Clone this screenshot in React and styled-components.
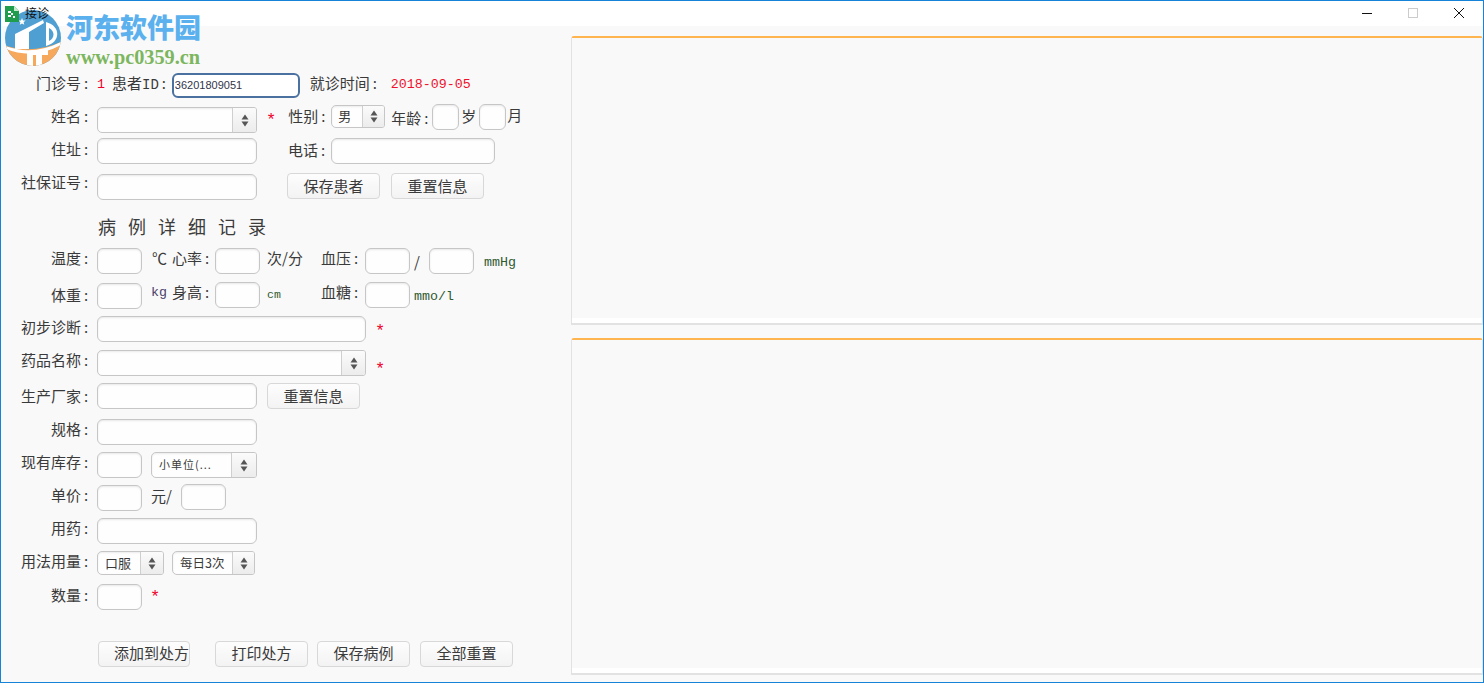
import React from "react";
import styled, { createGlobalStyle } from "styled-components";

const Global = createGlobalStyle`
  html, body { margin: 0; padding: 0; background: #fff; }
  #root { width: 1484px; height: 683px; overflow: hidden; }
  * { box-sizing: border-box; }
`;

const cjk = `"Noto Sans CJK SC", "Liberation Sans", sans-serif`;
const mono = `"Liberation Mono", "Noto Sans CJK SC", monospace`;

const Window = styled.div`
  position: relative;
  width: 1484px;
  height: 683px;
  border: 1px solid #1683d8;
  display: flex;
  flex-direction: column;
  background: #f9f9f9;
  font-family: ${cjk};
  color: #3a3a3a;
  overflow: hidden;
`;
const TitleBar = styled.div`
  height: 25px;
  flex: none;
  background: #fff;
  display: flex;
  align-items: center;
  padding-left: 4px;
`;
const TitleIcon = styled.div`
  display: flex;
  position: relative;
  z-index: 4;
`;
const TitleText = styled.span`
  margin-left: 6px;
  font-size: 12px;
  color: #111;
  position: relative;
  top: -1px;
  z-index: 4;
`;
const WinControls = styled.div`
  margin-left: auto;
  display: flex;
  margin-right: 1px;
`;
const WinBtn = styled.div`
  width: 46px;
  height: 25px;
  display: flex;
  align-items: flex-start;
  justify-content: center;
  padding-top: 7px;
`;
const Watermark = styled.div`
  position: absolute;
  left: 2px;
  top: 7px;
  display: flex;
  z-index: 3;
  pointer-events: none;
`;
const BrandText = styled.div`
  display: flex;
  flex-direction: column;
  margin-left: 3px;
  padding-top: 2px;
`;
const BrandName = styled.div`
  font-family: ${cjk};
  font-weight: 900;
  font-size: 27px;
  line-height: 34px;
  color: #5bb0ee;
`;
const BrandUrl = styled.div`
  font-family: "Liberation Serif", serif;
  font-weight: 700;
  font-size: 20.3px;
  line-height: 18px;
  margin-top: 4px;
  color: #7cb65e;
`;
const Body = styled.div`
  flex: 1;
  display: flex;
  min-height: 0;
`;
const Form = styled.div`
  width: 570px;
  flex: none;
  display: flex;
  flex-direction: column;
`;
const Row = styled.div`
  display: flex;
  align-items: center;
  height: ${p => p.$h || 26}px;
  margin-top: ${p => p.$top}px;
`;
const LabelBox = styled.div`
  width: 96px;
  flex: none;
  text-align: right;
  padding-right: 3px;
  font-size: 15px;
  white-space: nowrap;
  margin-bottom: ${p => (p.$up || 0) * 2}px;
`;
const Colon = styled.span`
  display: inline-block;
  width: 13px;
  padding-left: 3px;
  text-align: left;
`;
const Text = styled.div`
  flex: none;
  font-size: ${p => p.$size || 15}px;
  white-space: nowrap;
  width: ${p => (p.$w ? `${p.$w}px` : "auto")};
  margin-left: ${p => p.$ml || 0}px;
  margin-bottom: ${p => (p.$up || 0) * 2}px;
  margin-top: ${p => (p.$down || 0) * 2}px;
  color: ${p => p.$color || "inherit"};
`;
const Mono = styled(Text)`
  font-family: ${mono};
  font-size: ${p => p.$size || 13.3}px;
`;
const Star = styled.div`
  flex: none;
  font-family: ${mono};
  color: #f0002a;
  font-size: 17px;
  line-height: 17px;
  margin-left: ${p => p.$ml || 9}px;
  margin-top: ${p => p.$down ?? 4}px;
`;
const Input = styled.input`
  flex: none;
  width: ${p => p.$w}px;
  height: 26px;
  margin: 0 0 ${p => (p.$up || 0) * 2}px ${p => p.$ml || 0}px;
  padding: 0 3px;
  background: #fefefe;
  border: 1px solid #c6c6c6;
  border-radius: 6px;
  box-shadow: inset 0 1px 2px rgba(0, 0, 0, 0.09);
  outline: none;
  font-family: "Liberation Sans", sans-serif;
  font-size: 11px;
  color: #33334a;
`;
const FocusInput = styled(Input)`
  border: 2px solid #4a71a0;
  padding: 0 1px;
  height: 25px;
  box-shadow: none;
  background: #fff;
`;
const Select = styled.div`
  flex: none;
  display: flex;
  width: ${p => p.$w}px;
  height: ${p => p.$h || 26}px;
  margin-left: ${p => p.$ml || 0}px;
  margin-bottom: ${p => (p.$up || 0) * 2}px;
  background: #fefefe;
  border: 1px solid #c6c6c6;
  border-radius: 5px 3px 3px 5px;
  box-shadow: inset 0 1px 2px rgba(0, 0, 0, 0.08);
  overflow: hidden;
`;
const SelectValue = styled.div`
  flex: 1;
  padding-left: ${p => p.$pad || 7}px;
  font-size: ${p => p.$size || 13}px;
  letter-spacing: ${p => p.$track || 0}px;
  line-height: ${p => (p.$h || 26) - 3}px;
  white-space: nowrap;
  overflow: hidden;
`;
const SelectArrow = styled.div`
  flex: none;
  width: ${p => p.$w || 24}px;
  border-left: 1px solid #cfcfcf;
  background: linear-gradient(#fbfbfb, #ececec);
  display: flex;
  align-items: center;
  justify-content: center;
`;
const Button = styled.button`
  flex: none;
  width: ${p => p.$w}px;
  height: 26px;
  margin: 0 0 ${p => (p.$up || 0) * 2}px ${p => p.$ml || 0}px;
  padding: 0 0 ${p => p.$lift || 2}px ${p => p.$indent || 0}px;
  border: 1px solid #d8d8d8;
  border-radius: 4px;
  background: linear-gradient(#fdfdfd, #f3f3f3);
  font-family: ${cjk};
  font-size: 15px;
  color: #3a3a3a;
  white-space: nowrap;
  text-align: ${p => (p.$indent ? "left" : "center")};
`;
const Heading = styled.div`
  margin-left: 97px;
  font-size: 18px;
  line-height: 24px;
  height: 24px;
  letter-spacing: 12px;
  margin-top: 14px;
  color: #3c3c3c;
  white-space: nowrap;
`;
const Panels = styled.div`
  flex: 1;
  min-width: 0;
  display: flex;
  flex-direction: column;
  gap: 13px;
  padding: 10px 0 7px 0;
`;
const Panel = styled.div`
  height: ${p => p.$h}px;
  flex: none;
  border: 1px solid #e2e2e2;
  border-top: 2px solid #ffb54f;
  border-bottom: 2px solid #e2e2e2;
  border-radius: 3px 3px 0 0;
  display: flex;
  flex-direction: column;
`;
const PanelInner = styled.div`
  flex: 1;
  background: #f9f9f9;
`;
const PanelFoot = styled.div`
  height: 5px;
  background: #fff;
`;

const UpDown = () => (
  <svg width="8" height="13" viewBox="0 0 8 13">
    <path d="M4 0.5 L7.5 5.5 H0.5 Z" fill="#555" />
    <path d="M0.5 7.5 H7.5 L4 12.5 Z" fill="#555" />
  </svg>
);

const Sel = ({ w, h, ml, up, arrow, size, pad, track, children }) => (
  <Select $w={w} $h={h} $ml={ml} $up={up}>
    <SelectValue $size={size} $pad={pad} $h={h} $track={track}>{children}</SelectValue>
    <SelectArrow $w={arrow}><UpDown /></SelectArrow>
  </Select>
);

const Label = ({ up, children }) => (
  <LabelBox $up={up}>{children}<Colon>:</Colon></LabelBox>
);

const Field = ({ up, w, ml, children }) => (
  <Text $up={up} $w={w} $ml={ml}>{children}<Colon>:</Colon></Text>
);

const AppIcon = () => (
  <svg width="14" height="16" viewBox="0 0 14 16">
    <path d="M0 0 H9 L14 5 V16 H0 Z" fill="#1f9d4d" />
    <path d="M9 0 L14 5 H9 Z" fill="#c8ecd0" />
    <path d="M3 5 h3 v2 h-3z M6 7 h2 v2 h-2z M3 9 h3 v2 h-3z M8 10 h2 v2 h-2z" fill="#fff" />
  </svg>
);

const Logo = () => (
  <svg width="60" height="60" viewBox="0 0 60 60">
    <defs>
      <clipPath id="disc"><circle cx="30" cy="30" r="28" /></clipPath>
    </defs>
    <g clipPath="url(#disc)">
      <rect width="60" height="60" fill="#4f9fd2" />
      <path d="M0 37 Q30 47 60 33 V60 H0 Z" fill="#f6a85c" />
      <path d="M2 38 Q30 48 58 34 L58 37 Q30 52 3 41 Z" fill="#fff" />
      <path d="M12 26 L40 12 L41 15 L26 24 V41 H12 Z" fill="#fff" />
      <path d="M43 14 C58 18 58 34 43 38 Z" fill="#fff" />
      <path d="M46 20 C52 23 52 30 46 33 Z" fill="#4f9fd2" />
      <path d="M24 44 L45 41 V47 H39 V60 H33 V47 H30 V60 H24 Z" fill="#fff" />
    </g>
    <path d="M19 10 l1 2.4 2.6 .2 -2 1.7 .7 2.5 -2.3 -1.4 -2.3 1.4 .7 -2.5 -2 -1.7 2.6 -.2z" fill="#fff" />
  </svg>
);

export default function App() {
  return (
    <>
      <Global />
      <Window>
        <TitleBar>
          <TitleIcon><AppIcon /></TitleIcon>
          <TitleText>接诊</TitleText>
          <WinControls>
            <WinBtn>
              <svg width="10" height="12" viewBox="0 0 10 12"><path d="M0 5.5 H10" stroke="#111" strokeWidth="1" /></svg>
            </WinBtn>
            <WinBtn>
              <svg width="10" height="10" viewBox="0 0 10 10"><rect x="0.5" y="0.5" width="9" height="9" fill="none" stroke="#ccc" /></svg>
            </WinBtn>
            <WinBtn>
              <svg width="10" height="10" viewBox="0 0 10 10"><path d="M0 0 L10 10 M10 0 L0 10" stroke="#111" strokeWidth="1" /></svg>
            </WinBtn>
          </WinControls>
        </TitleBar>
        <Watermark>
          <Logo />
          <BrandText>
            <BrandName>河东软件园</BrandName>
            <BrandUrl>www.pc0359.cn</BrandUrl>
          </BrandText>
        </Watermark>
        <Body>
          <Form>
            <Row $top={46}>
              <Label up={3}>门诊号</Label>
              <Mono $w={15} $color="#f0002a" $up={1}>1</Mono>
              <Text $up={3}>患者<Mono as="span" $size={14}>ID</Mono><Colon>:</Colon></Text>
              <FocusInput $w={128} readOnly value="36201809051" />
              <Field up={3} ml={10}>就诊时间</Field>
              <Mono $ml={8} $color="#f0102a" $up={1}>2018-09-05</Mono>
            </Row>
            <Row $top={9}>
              <Label up={5}>姓名</Label>
              <Sel w={160} />
              <Star $down={0}>*</Star>
              <Field ml={12} w={43} up={5}>性别</Field>
              <Sel w={54} h={23} up={4} arrow={22} size={13} pad={6}>男</Sel>
              <Field ml={6} w={41} up={3}>年龄</Field>
              <Input $w={27} $up={3} />
              <Text $ml={2} $w={18} $up={5}>岁</Text>
              <Input $w={27} $up={3} />
              <Text $ml={1} $up={6}>月</Text>
            </Row>
            <Row $top={5}>
              <Label up={3}>住址</Label>
              <Input $w={160} />
              <Field ml={31} w={43} up={2}>电话</Field>
              <Input $w={164} />
            </Row>
            <Row $top={10}>
              <Label up={6}>社保证号</Label>
              <Input $w={160} />
              <Button $w={93} $ml={30} $up={1}>保存患者</Button>
              <Button $w={93} $ml={11} $up={1}>重置信息</Button>
            </Row>
            <Heading>病例详细记录</Heading>
            <Row $top={10}>
              <Label up={4}>温度</Label>
              <Input $w={45} />
              <Text $ml={10} $w={20} $up={4}>℃</Text>
              <Field w={43} up={4}>心率</Field>
              <Input $w={45} />
              <Text $ml={7} $w={54} $up={4}>次/分</Text>
              <Field w={44} up={4}>血压</Field>
              <Input $w={45} />
              <Text $ml={4} $w={15} $up={0}>/</Text>
              <Input $w={45} />
              <Mono $ml={10} $color="#2f5a2f" $down={1}>mmHg</Mono>
            </Row>
            <Row $top={9}>
              <Label up={2}>体重</Label>
              <Input $w={45} />
              <Mono $ml={9} $w={21} $color="#4a3f6a" $up={4}>kg</Mono>
              <Field w={43} up={5}>身高</Field>
              <Input $w={45} $up={1} />
              <Mono $ml={7} $w={54} $size={11.5} $color="#2f5a2f" $up={2}>cm</Mono>
              <Field w={44} up={5}>血糖</Field>
              <Input $w={45} $up={1} />
              <Mono $ml={4} $color="#2f5a2f">mmo/l</Mono>
            </Row>
            <Row $top={7}>
              <Label up={3}>初步诊断</Label>
              <Input $w={269} />
              <Star>*</Star>
            </Row>
            <Row $top={8}>
              <Label up={4}>药品名称</Label>
              <Sel w={269} />
              <Star $down={12}>*</Star>
            </Row>
            <Row $top={7}>
              <Label up={1}>生产厂家</Label>
              <Input $w={160} />
              <Button $w={93} $ml={10}>重置信息</Button>
            </Row>
            <Row $top={10}>
              <Label up={4}>规格</Label>
              <Input $w={160} />
            </Row>
            <Row $top={7}>
              <Label up={4}>现有库存</Label>
              <Input $w={45} />
              <Sel w={106} ml={9} size={11} arrow={25} track={1}>小单位(...</Sel>
            </Row>
            <Row $top={7}>
              <Label up={4}>单价</Label>
              <Input $w={45} />
              <Text $ml={9} $w={30} $up={3}>元/</Text>
              <Input $w={45} $up={1} />
            </Row>
            <Row $top={7}>
              <Label up={4}>用药</Label>
              <Input $w={160} />
            </Row>
            <Row $top={7} $h={24}>
              <Label up={3}>用法用量</Label>
              <Sel w={67} h={24} arrow={23} size={13}>口服</Sel>
              <Sel w={83} h={24} ml={8} arrow={22} size={12.5}>每日3次</Sel>
            </Row>
            <Row $top={9}>
              <Label up={3}>数量</Label>
              <Input $w={45} />
              <Star $ml={8} $down={0}>*</Star>
            </Row>
            <Row $top={31}>
              <Button $w={92} $ml={97} $indent={15} $lift={6}>添加到处方</Button>
              <Button $w={93} $ml={25} $lift={6}>打印处方</Button>
              <Button $w={93} $ml={9} $lift={6}>保存病例</Button>
              <Button $w={93} $ml={10} $lift={6}>全部重置</Button>
            </Row>
          </Form>
          <Panels>
            <Panel $h={289}><PanelInner /><PanelFoot /></Panel>
            <Panel $h={337}><PanelInner /><PanelFoot /></Panel>
          </Panels>
        </Body>
      </Window>
    </>
  );
}
